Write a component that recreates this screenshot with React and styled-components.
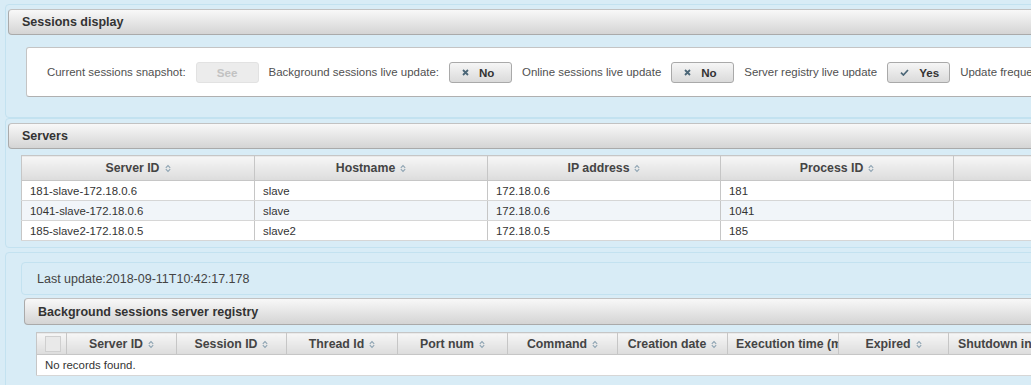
import styled, { createGlobalStyle } from "styled-components";

const GlobalStyle = createGlobalStyle`
  html, body {
    margin: 0;
    padding: 0;
    overflow: hidden;
    background: #d8ecf6;
  }
  body {
    font-family: "Liberation Sans", Arial, sans-serif;
    color: #333;
  }
`

const servers = [
    { id: "181-slave-172.18.0.6", host: "slave", ip: "172.18.0.6", pid: "181" },
    { id: "1041-slave-172.18.0.6", host: "slave", ip: "172.18.0.6", pid: "1041" },
    { id: "185-slave2-172.18.0.5", host: "slave2", ip: "172.18.0.5", pid: "185" },
]

const serverCols = [
    { label: "Server ID", w: 233 },
    { label: "Hostname", w: 233 },
    { label: "IP address", w: 233 },
    { label: "Process ID", w: 233 },
    { label: "", w: 233 },
]

const registryCols = [
    { label: "Server ID", w: 110 },
    { label: "Session ID", w: 110 },
    { label: "Thread Id", w: 111 },
    { label: "Port num", w: 110 },
    { label: "Command", w: 110 },
    { label: "Creation date", w: 110 },
    { label: "Execution time (ms)", w: 111 },
    { label: "Expired", w: 110 },
    { label: "Shutdown initiated", w: 140 },
]

const sum = cols => cols.reduce((t, c) => t + c.w, 0)

function SortIcon(){
    return(
        <SortSvg width="6" height="9" viewBox="0 0 6 9">
            <path d="M0.8 3.8 L3 1.5 L5.2 3.8" />
            <path d="M0.8 5.2 L3 7.5 L5.2 5.2" />
        </SortSvg>
    )
}

function CrossIcon(){
    return(
        <svg width="7" height="7" viewBox="0 0 7 7">
            <path d="M1 1 L6 6 M6 1 L1 6" stroke="#4b6677" strokeWidth="1.8" />
        </svg>
    )
}

function CheckIcon(){
    return(
        <svg width="9" height="7" viewBox="0 0 9 7">
            <path d="M1 3.6 L3.4 6 L8 1" stroke="#4b6677" strokeWidth="1.7" fill="none" />
        </svg>
    )
}

export default function App(){
    return(
        <>
            <GlobalStyle />
            <Page>
                <Panel $bottom={20}>
                    <TitleBar>Sessions display</TitleBar>
                    <Toolbar>
                        <Label>Current sessions snapshot:</Label>
                        <ToggleButton disabled $off>See</ToggleButton>
                        <Label>Background sessions live update:</Label>
                        <ToggleButton><CrossIcon /><span>No</span></ToggleButton>
                        <Label>Online sessions live update</Label>
                        <ToggleButton><CrossIcon /><span>No</span></ToggleButton>
                        <Label>Server registry live update</Label>
                        <ToggleButton><CheckIcon /><span>Yes</span></ToggleButton>
                        <Label>Update frequency (sec):</Label>
                    </Toolbar>
                </Panel>

                <Panel $bottom={6}>
                    <TitleBar>Servers</TitleBar>
                    <Grid $left={13} $top={6} $width={sum(serverCols)}>
                        <colgroup>
                            {serverCols.map((c, i) => <col key={i} style={{ width: c.w }} />)}
                        </colgroup>
                        <thead>
                            <tr>
                                {serverCols.map((c, i) =>
                                    <HeadCell key={i} $h={24}>{c.label && <>{c.label}<SortIcon /></>}</HeadCell>
                                )}
                            </tr>
                        </thead>
                        <tbody>
                            {servers.map((s, i) =>
                                <Row key={s.id} $odd={i % 2 === 1}>
                                    <Cell>{s.id}</Cell>
                                    <Cell>{s.host}</Cell>
                                    <Cell>{s.ip}</Cell>
                                    <Cell>{s.pid}</Cell>
                                    <Cell></Cell>
                                </Row>
                            )}
                        </tbody>
                    </Grid>
                </Panel>

                <Panel $gap={4} $top={9} $side={15} $bottom={20}>
                    <InfoBox>Last update:2018-09-11T10:42:17.178</InfoBox>
                    <SubPanel>
                        <TitleBar $tall>Background sessions server registry</TitleBar>
                        <Grid $left={12} $top={7} $width={30 + sum(registryCols)}>
                            <colgroup>
                                <col style={{ width: 30 }} />
                                {registryCols.map(c => <col key={c.label} style={{ width: c.w }} />)}
                            </colgroup>
                            <thead>
                                <tr>
                                    <HeadCell $h={21}><CheckBox /></HeadCell>
                                    {registryCols.map(c =>
                                        <HeadCell key={c.label} $h={21}>{c.label}<SortIcon /></HeadCell>
                                    )}
                                </tr>
                            </thead>
                            <tbody>
                                <Row>
                                    <Cell colSpan={registryCols.length + 1} $h={20}>No records found.</Cell>
                                </Row>
                            </tbody>
                        </Grid>
                    </SubPanel>
                </Panel>
            </Page>
        </>
    )
}

const Page = styled.div`
    width: 1400px;
    padding-top: 4px;
`
const Panel = styled.section`
    margin: ${p => p.$gap || 0}px 0 0 5px;
    border: 1px solid #c3e2f0;
    border-radius: 4px;
    padding: ${p => p.$top || 4}px ${p => p.$side || 2}px ${p => p.$bottom}px;
`
const SubPanel = styled.div`
    padding: 3px 0 0 3px;
`
const TitleBar = styled.div`
    box-sizing: border-box;
    height: ${p => p.$tall ? 27 : 26}px;
    display: flex;
    align-items: center;
    padding-left: 13px;
    border: 1px solid #aaaaaa;
    border-top-color: #c2c2c2;
    border-radius: 4px;
    background: linear-gradient(#f8f8f8, #d4d4d4);
    font-size: 12.5px;
    font-weight: bold;
    color: #333;
`
const Toolbar = styled.div`
    box-sizing: border-box;
    height: 50px;
    margin: 12px 0 0 18px;
    display: flex;
    align-items: center;
    gap: 10px;
    padding-left: 20px;
    background: #fff;
    border: 1px solid #c4c4c4;
    border-bottom-color: #b0b0b0;
    border-radius: 3px;
`
const Label = styled.span`
    font-size: 11.45px;
    color: #505050;
    white-space: nowrap;
`
const ToggleButton = styled.button`
    box-sizing: border-box;
    width: 63px;
    height: 21px;
    display: flex;
    align-items: center;
    justify-content: ${p => p.$off ? "center" : "flex-start"};
    gap: 10px;
    padding: 0 0 0 ${p => p.$off ? 0 : 12}px;
    border: 1px solid ${p => p.$off ? "#e2e2e2" : "#a9a9a9"};
    border-radius: 3px;
    background: ${p => p.$off ? "#ececec" : "linear-gradient(#f6f6f6, #dadada)"};
    font-family: "Liberation Sans", Arial, sans-serif;
    font-size: 11.6px;
    font-weight: bold;
    color: ${p => p.$off ? "#c2c2c2" : "#333"};
    flex-shrink: 0;
`
const InfoBox = styled.div`
    box-sizing: border-box;
    height: 33px;
    display: flex;
    align-items: center;
    padding-left: 15px;
    border: 1px solid #c3e2f0;
    border-radius: 4px;
    font-size: 12.5px;
    color: #444;
`
const Grid = styled.table`
    width: ${p => p.$width}px;
    margin: ${p => p.$top}px 0 0 ${p => p.$left}px;
    border-collapse: collapse;
    table-layout: fixed;
    background: #fff;
    border: 1px solid #c6c6c6;
`
const HeadCell = styled.th`
    height: ${p => p.$h}px;
    padding: 0 8px;
    border: 1px solid #c6c6c6;
    background: linear-gradient(#f6f6f6, #dcdcdc);
    font-size: 12.3px;
    font-weight: bold;
    color: #444;
    text-align: center;
    white-space: nowrap;
    overflow: hidden;
`
const SortSvg = styled.svg`
    margin-left: 5px;
    vertical-align: -1px;
    fill: none;
    stroke: #8ea4b3;
    stroke-width: 1.1;
`
const CheckBox = styled.span`
    display: block;
    width: 14px;
    height: 14px;
    margin: 0 auto;
    background: #e9e9e9;
    border: 1px solid #cfcfcf;
`
const Row = styled.tr`
    background: ${p => p.$odd ? "#f1f5f9" : "#fff"};
`
const Cell = styled.td`
    height: ${p => p.$h || 19}px;
    padding: 0 8px;
    border: 1px solid #d6d6d6;
    border-left-color: #c6c6c6;
    border-right-color: #c6c6c6;
    font-size: 11.4px;
    color: #333;
    white-space: nowrap;
    overflow: hidden;
`
